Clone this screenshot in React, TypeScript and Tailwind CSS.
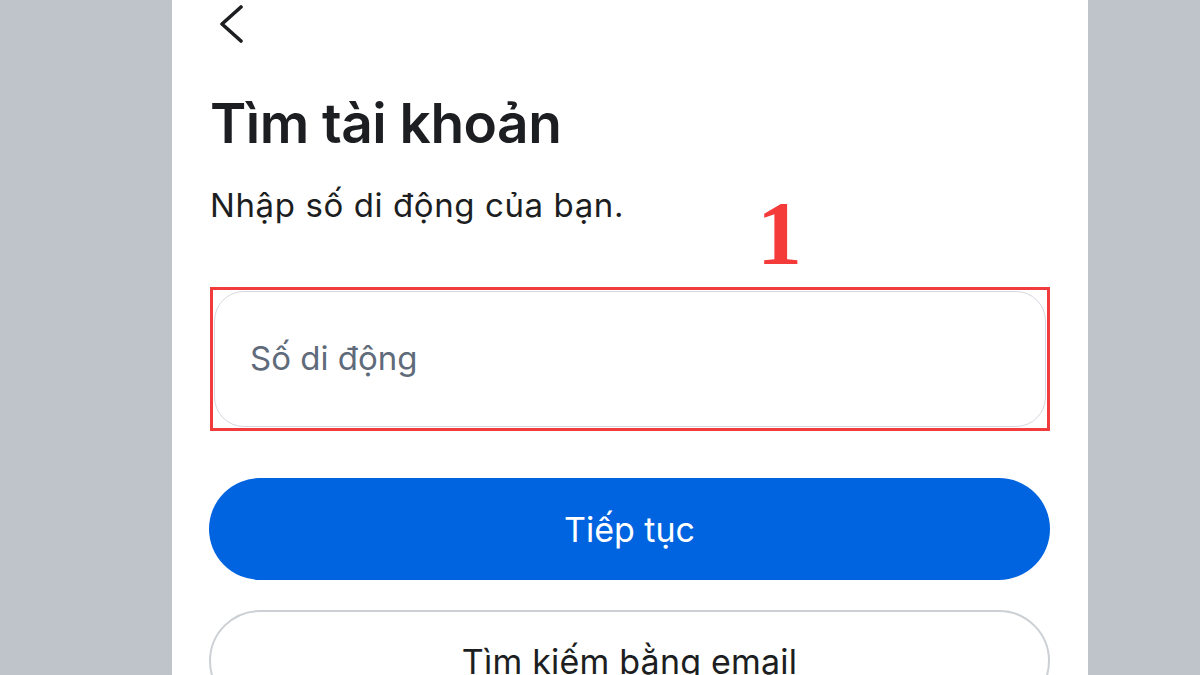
import React from 'react'

const font = { fontFamily: 'Inter, "Noto Sans", sans-serif' }

export default function App() {
  return (
    <div className="w-[1200px] h-[675px] overflow-hidden bg-[#bfc4cb] pl-[172px]" style={font}>
      <div className="relative w-[916px] h-full bg-white px-[38px] flex flex-col">
        {/* back chevron */}
        <div className="pt-[5px] pl-[8px] shrink-0">
          <svg className="block" width="26" height="38" viewBox="0 0 26 38" fill="none">
            <path d="M23 2 L4 19 L23 36" stroke="#1c1e21" strokeWidth="3.6" strokeLinecap="round" strokeLinejoin="round" />
          </svg>
        </div>

        <h1 className="mt-[50px] shrink-0 text-[55px] leading-[60px] font-semibold text-[#1c1e21] tracking-[-0.5px]">Tìm tài khoản</h1>
        <p className="mt-[32px] shrink-0 text-[33px] leading-[40px] text-[#1c1e21] tracking-[0.6px]">Nhập số di động của bạn.</p>

        <div className="relative mt-[62px] shrink-0 border-[3px] border-[#f03c3c] p-px">
          <span className="absolute left-[544px] -top-[101px] text-[90px] leading-[90px] font-bold text-[#f53a3a]" style={{ fontFamily: '"Liberation Serif", "DejaVu Serif", serif' }}>1</span>
          <div className="h-[136px] rounded-[30px] border border-[#d4d8de] flex items-center pl-[35px]">
            <span className="text-[33px] text-[#5f6b7a]">Số di động</span>
          </div>
        </div>

        <button className="mt-[47px] shrink-0 h-[102px] w-[841px] -ml-px rounded-full bg-[#0064e0] text-white text-[34px] flex items-center justify-center">
          Tiếp tục
        </button>

        <button className="mt-[30px] shrink-0 h-[102px] w-[841px] -ml-px rounded-full border-2 border-[#ccd0d5] bg-white text-[#1c1e21] text-[34px] tracking-[0.2px] flex items-center justify-center">
          Tìm kiếm bằng email
        </button>
      </div>
    </div>
  )
}
